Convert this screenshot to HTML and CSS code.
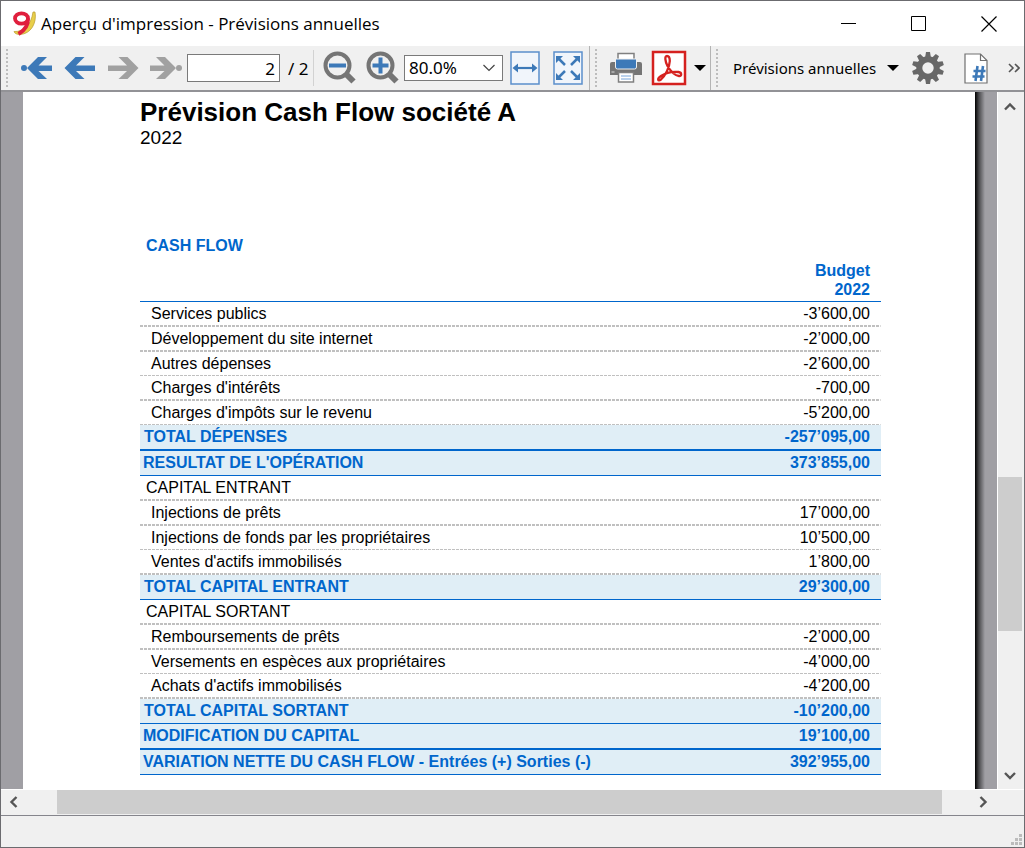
FILE: index.html
```
<!DOCTYPE html>
<html lang="fr">
<head>
<meta charset="utf-8">
<title>Aperçu d'impression - Prévisions annuelles</title>
<link rel="stylesheet" href="styles.css">
</head>
<body>
<div class="window">
  <header class="titlebar">
    <svg class="app-icon" width="26" height="26" viewBox="0 0 26 26" aria-hidden="true">
      <path d="M22 1h2c2 11-4 22-15 22.500-3 0-5.500-1-6-3C12 21 20 15 22 1z" fill="#e8cf4a" stroke="#b89a2c" stroke-width=".7"/>
      <ellipse cx="10.500" cy="7.500" rx="6.500" ry="5.200" fill="#fff" stroke="#e01f3d" stroke-width="3.800"/>
      <path d="M17 7.500c.2 6-3.500 12-9.500 15.500" fill="none" stroke="#e01f3d" stroke-width="3.800"/>
    </svg>
    <span class="window-title">Aperçu d'impression - Prévisions annuelles</span>
    <div class="caption-buttons">
      <button class="caption-button" type="button" aria-label="Réduire"><svg width="16" height="16"><path d="M0 7.500h15" stroke="#000"/></svg></button>
      <button class="caption-button" type="button" aria-label="Agrandir"><svg width="16" height="16"><path d="M.5.5h14v14h-14z" fill="none" stroke="#000"/></svg></button>
      <button class="caption-button" type="button" aria-label="Fermer"><svg width="16" height="16"><path d="M.5.5l15 15M15.500.5l-15 15" stroke="#000" stroke-width="1.200"/></svg></button>
    </div>
  </header>

  <div class="toolbars">
    <div class="toolbar first">
      <span class="grip"></span>
      <button class="tool nav" type="button" aria-label="Première page"><svg width="32" height="24" viewBox="0 0 32 24" fill="#3d79b8"><circle cx="3" cy="12" r="3"/><path d="M17 1h9l-8.500 8.500H31v5.500H17.500L26 23h-9L6 12z"/></svg></button>
      <button class="tool nav" type="button" aria-label="Page précédente"><svg width="32" height="24" viewBox="0 0 32 24" fill="#3d79b8"><path d="M11.500 1h9L12 9.500h19v5.500H12l8.500 8h-9L.5 12z"/></svg></button>
      <button class="tool nav" type="button" aria-label="Page suivante"><svg width="32" height="24" viewBox="0 0 32 24" fill="#a1a1a1"><path d="M20.500 1h-9L20 9.500H1v5.500h19l-8.500 8h9L31.500 12z"/></svg></button>
      <button class="tool nav" type="button" aria-label="Dernière page"><svg width="32" height="24" viewBox="0 0 32 24" fill="#a1a1a1"><circle cx="29" cy="12" r="3"/><path d="M15 1H6l8.500 8.500H0v5.500h14.500L6 23h9l11-11z"/></svg></button>
      <input class="page-input" type="text" value="2" aria-label="Page">
      <span class="page-total">/ 2</span>
      <span class="divider"></span>
      <button class="tool nav" type="button" aria-label="Zoom arrière"><svg width="34" height="34" viewBox="0 0 34 34"><circle cx="14.500" cy="14.500" r="12" fill="none" stroke="#757575" stroke-width="4"/><path d="M23 23l7.500 7.500" stroke="#757575" stroke-width="6"/><path d="M6 14.500h17" stroke="#3d79b8" stroke-width="4"/></svg></button>
      <button class="tool nav" type="button" aria-label="Zoom avant"><svg width="34" height="34" viewBox="0 0 34 34"><circle cx="14.500" cy="14.500" r="12" fill="none" stroke="#757575" stroke-width="4"/><path d="M23 23l7.500 7.500" stroke="#757575" stroke-width="6"/><path d="M6.500 14.500h16M14.500 6.500v16" stroke="#3d79b8" stroke-width="4"/></svg></button>
      <div class="zoom-box">
        <select class="zoom-select" aria-label="Zoom"><option>80.0%</option><option>100.0%</option></select>
        <svg class="zoom-arrow" width="12" height="8"><path d="M.5 1l5.500 5.500L11.500 1" fill="none" stroke="#444" stroke-width="1.200"/></svg>
      </div>
      <button class="tool nav" type="button" aria-label="Largeur de page"><svg width="30" height="34" viewBox="0 0 30 34"><path d="M1 1h28v32H1z" fill="#f1f5fb" stroke="#5b8fcb" stroke-width="1.500"/><path d="M7 17h16" stroke="#3d79b8" stroke-width="2.200"/><path d="M2.500 17L8 12.500v9zM27.500 17L22 12.500v9z" fill="#3d79b8"/></svg></button>
      <button class="tool nav" type="button" aria-label="Page entière"><svg width="30" height="34" viewBox="0 0 30 34"><path d="M1 1h28v32H1z" fill="#f1f5fb" stroke="#5b8fcb" stroke-width="1.500"/><path d="M5 7l7 7M25 7l-7 7M5 27l7-7M25 27l-7-7" stroke="#3d79b8" stroke-width="2.500"/><path d="M3 5h7l-7 7zM27 5h-7l7 7zM3 29h7l-7-7zM27 29h-7l7-7z" fill="#3d79b8"/></svg></button>
    </div>
    <div class="toolbar">
      <span class="grip"></span>
      <button class="tool nav" type="button" aria-label="Imprimer"><svg width="34" height="32" viewBox="0 0 34 32"><path d="M9 11V1.500h16V11" fill="#fff" stroke="#808080" stroke-width="1.500"/><path d="M1 12q0-2 2-2h28q2 0 2 2v11H1z" fill="#757575"/><path d="M6.500 7h21v8q0 2-2 2h-17q-2 0-2-2z" fill="#3d79b8" stroke="#f0f0f0"/><path d="M2.500 20h3" stroke="#ddd"/><path d="M9.500 20.500h15v9.500h-15z" fill="#fff" stroke="#808080" stroke-width="1.500"/><path d="M12 24h10M12 27h10" stroke="#76a5db"/></svg></button>
      <button class="tool nav" type="button" aria-label="Exporter en PDF"><svg width="36" height="36" viewBox="0 0 36 36" fill="none" stroke="#d5211f"><path d="M2 2h32v32H2z" fill="#fff" stroke-width="2.500"/><path d="M16 6c-2.500 0-2 5 .5 10 3 5 7 9.500 11.500 10 3 .3 3-3.500-.5-4-6-.7-13 1-17.500 4s-3 6 0 3.500c4-3.500 8.500-11.500 8.800-18.500 0-3-1-5-2.800-5z" stroke-width="2.300"/></svg></button>
      <button class="tool caret" type="button" aria-label="Options PDF"><svg width="12" height="6"><path d="M0 0h12L6 6z"/></svg></button>
    </div>
    <div class="toolbar last">
      <span class="grip"></span>
      <button class="tool report" type="button">Prévisions annuelles<svg width="12" height="6"><path d="M0 0h12L6 6z"/></svg></button>
      <button class="tool gear" type="button" aria-label="Paramètres"><svg width="32" height="32" viewBox="-16 -16 32 32"><circle r="8.700" fill="none" stroke="#686868" stroke-width="6"/><g fill="#686868"><path id="tooth" d="M-3-10l1-6h4l1 6z"/><use href="#tooth" transform="rotate(36)"/><use href="#tooth" transform="rotate(72)"/><use href="#tooth" transform="rotate(108)"/><use href="#tooth" transform="rotate(144)"/><use href="#tooth" transform="rotate(180)"/><use href="#tooth" transform="rotate(216)"/><use href="#tooth" transform="rotate(252)"/><use href="#tooth" transform="rotate(288)"/><use href="#tooth" transform="rotate(324)"/></g></svg></button>
      <button class="tool sheet" type="button" aria-label="Numéros de page"><svg width="24" height="31" viewBox="0 0 24 31"><path d="M1 1h15.500L23 7.500V30H1z" fill="#fff" stroke="#707070" stroke-width="1.200"/><path d="M16.500 1v6.500H23" fill="none" stroke="#707070" stroke-width="1.200"/><path d="M13.500 13l-2 15M19 13l-2 15M9.500 18h12M8.500 23.500h12" fill="none" stroke="#3d79b8" stroke-width="2.600"/></svg></button>
      <button class="tool more" type="button" aria-label="Plus d'outils"><svg width="12" height="10" fill="none" stroke="#555" stroke-width="1.600"><path d="M1 1l4 4-4 4M7 1l4 4-4 4"/></svg></button>
    </div>
  </div>

  <div class="workspace">
    <main class="viewport">
      <article class="sheet-page">
        <h1 class="doc-title">Prévision Cash Flow société A</h1>
        <p class="doc-year">2022</p>
        <table class="cash">
          <caption class="cash-caption">CASH FLOW</caption>
          <thead>
            <tr><th scope="col" aria-label="Description"></th><th scope="col" class="amount">Budget<br>2022</th></tr>
          </thead>
          <tbody>
            <tr class="item"><td>Services publics</td><td class="amount">-3’600,00</td></tr>
            <tr class="item"><td>Développement du site internet</td><td class="amount">-2’000,00</td></tr>
            <tr class="item thin"><td>Autres dépenses</td><td class="amount">-2’600,00</td></tr>
            <tr class="item"><td>Charges d'intérêts</td><td class="amount">-700,00</td></tr>
            <tr class="item thin"><td>Charges d'impôts sur le revenu</td><td class="amount">-5’200,00</td></tr>
            <tr class="total strong"><td>TOTAL DÉPENSES</td><td class="amount">-257’095,00</td></tr>
            <tr class="total result"><td>RESULTAT DE L'OPÉRATION</td><td class="amount">373’855,00</td></tr>
            <tr class="section"><td>CAPITAL ENTRANT</td><td></td></tr>
            <tr class="item"><td>Injections de prêts</td><td class="amount">17’000,00</td></tr>
            <tr class="item thin"><td>Injections de fonds par les propriétaires</td><td class="amount">10’500,00</td></tr>
            <tr class="item"><td>Ventes d'actifs immobilisés</td><td class="amount">1’800,00</td></tr>
            <tr class="total"><td>TOTAL CAPITAL ENTRANT</td><td class="amount">29’300,00</td></tr>
            <tr class="section"><td>CAPITAL SORTANT</td><td></td></tr>
            <tr class="item"><td>Remboursements de prêts</td><td class="amount">-2’000,00</td></tr>
            <tr class="item thin"><td>Versements en espèces aux propriétaires</td><td class="amount">-4’000,00</td></tr>
            <tr class="item"><td>Achats d'actifs immobilisés</td><td class="amount">-4’200,00</td></tr>
            <tr class="total"><td>TOTAL CAPITAL SORTANT</td><td class="amount">-10’200,00</td></tr>
            <tr class="total strong result"><td>MODIFICATION DU CAPITAL</td><td class="amount">19’100,00</td></tr>
            <tr class="total result"><td>VARIATION NETTE DU CASH FLOW - Entrées (+) Sorties (-)</td><td class="amount">392’955,00</td></tr>
          </tbody>
        </table>
      </article>
      <div class="page-shadow"></div>
    </main>
    <div class="vscroll" aria-hidden="true">
      <svg class="arrow" width="12" height="10"><path d="M1 7.500l5-5 5 5" /></svg>
      <div class="vtrack"><span class="vbefore"></span><span class="vthumb"></span><span class="vafter"></span></div>
      <svg class="arrow" width="12" height="10"><path d="M1 2l5 5 5-5"/></svg>
    </div>
  </div>
  <div class="hscroll" aria-hidden="true">
    <svg class="arrow" width="10" height="12"><path d="M7.500 1l-5 5 5 5"/></svg>
    <div class="htrack"><span class="hthumb"></span><span class="hafter"></span></div>
    <svg class="arrow" width="10" height="12"><path d="M2.500 1l5 5-5 5"/></svg>
  </div>
  <footer class="statusbar">
    <svg width="11" height="11" fill="#bcbcbc"><path d="M8 0h3v3H8zM8 4h3v3H8zM8 8h3v3H8zM4 4h3v3H4zM4 8h3v3H4zM0 8h3v3H0z"/></svg>
  </footer>
</div>
</body>
</html>
```
FILE: styles.css
```
* { box-sizing: border-box; }

body {
  margin: 0;
  font-family: "Liberation Sans", Arial, sans-serif;
  color: #000;
}

button {
  border: 0;
  padding: 0;
  background: none;
  color: inherit;
}

svg { display: block; flex: none; }

.window {
  display: flex;
  flex-direction: column;
  height: 100vh;
  border: 1px solid #6b6b6f;
  background: #f0f0f0;
}

/* Title bar */
.titlebar {
  display: flex;
  align-items: center;
  flex: none;
  height: 45px;
  padding-left: 10px;
  background: #fff;
}

.window-title {
  flex: 1;
  margin-left: 4px;
  font: 17px "Open Sans", "Noto Sans", sans-serif;
}

.caption-buttons { display: flex; }

.caption-button {
  display: grid;
  place-items: center;
  width: 70px;
  height: 42px;
}

/* Toolbars */
.toolbars {
  display: flex;
  flex: none;
  height: 46px;
  border-bottom: 2px solid #929296;
}

.toolbar {
  display: flex;
  align-items: center;
  flex: none;
  padding-left: 5px;
  border-right: 1px solid #b4b4b4;
  font: 17px "Noto Sans", sans-serif;
}

.toolbar.last { flex: 1; border-right: 0; }

.grip {
  width: 2px;
  height: 38px;
  margin-right: 7px;
  background: repeating-linear-gradient(#bdbdbd 0 2px, transparent 2px 4px);
}

.tool {
  display: flex;
  align-items: center;
  justify-content: center;
  height: 40px;
}

.nav { width: 43px; }

.page-input {
  width: 93px;
  height: 28px;
  padding: 0 4px;
  border: 1px solid #7a7a7a;
  background: #fff;
  font: inherit;
  text-align: right;
}

.page-total { width: 33px; padding-left: 8px; white-space: nowrap; }

.divider {
  width: 1px;
  height: 36px;
  margin-right: 4px;
  background: #d2d2d2;
}

.zoom-box {
  display: grid;
  align-items: center;
  width: 99px;
}

.zoom-select {
  grid-area: 1 / 1;
  width: 100%;
  height: 26px;
  padding: 0 4px;
  border: 1px solid #7a7a7a;
  border-radius: 0;
  background: #fff;
  color: #000;
  font: inherit;
  line-height: 24px;
  appearance: none;
}

.zoom-arrow {
  grid-area: 1 / 1;
  justify-self: end;
  margin-right: 8px;
  pointer-events: none;
}

.caret { width: 20px; }
.report { gap: 11px; margin-left: 8px; font: 15px "Noto Sans", sans-serif; }
.gear { width: 32px; margin-left: 13px; }
.sheet { width: 24px; margin-left: 20px; }
.more { width: 16px; margin: 0 2px 0 auto; }

/* Document area */
.workspace { display: flex; flex: 1; min-height: 0; }

.viewport {
  display: flex;
  flex: 1;
  padding-left: 22px;
  overflow: hidden;
  background: #a09fa4;
}

.sheet-page {
  flex: 1;
  padding: 5px 94px 0 117px;
  background: #fff;
}

.page-shadow {
  width: 22px;
  background: linear-gradient(to right, #000 0, #4c4c4f 4px, #a09fa4 10px);
}

.doc-title {
  margin: 0;
  font-size: 26px;
  line-height: 30px;
}

.doc-year {
  margin: 0 0 86px;
  font-size: 19px;
  line-height: 22px;
}

.cash {
  width: 100%;
  border-spacing: 0;
  font-size: 16px;
}

.cash-caption {
  padding-left: 6px;
  color: #0066cc;
  font-weight: bold;
  line-height: 22px;
  text-align: left;
}

.cash th {
  padding: 4px 0 2px;
  border-bottom: 1px solid #0066cc;
  color: #0066cc;
  line-height: 19px;
}

.cash td { padding: 1px 0 0; line-height: 22px; }
.cash .amount { padding-right: 11px; text-align: right; }
.cash .item td:first-child { padding-left: 11px; }
.cash .section td:first-child { padding-left: 6px; }
.cash .total td:first-child { padding-left: 4px; }
.cash .result td:first-child { padding-left: 3px; }

.item,
.section {
  height: 25px;
  background: repeating-linear-gradient(to right, #c0c0c0 0 3px, #fff 3px 4px) bottom / 100% 2px no-repeat;
}

.item td,
.section td { border-bottom: 2px solid transparent; }

.item.thin { height: 24px; background-size: 100% 1px; }
.item.thin td { border-bottom-width: 1px; }

.cash .total td {
  padding-bottom: 1px;
  border-bottom: 1px solid #0066cc;
  background: #e0eef6;
  color: #0066cc;
  font-weight: bold;
}

.cash .total.strong td { border-bottom-width: 2px; }

/* Scroll bars */
.arrow { fill: none; stroke: #555; stroke-width: 2.4; }

.vscroll {
  display: flex;
  flex-direction: column;
  align-items: center;
  width: 27px;
  padding: 10px 2px 8px 0;
  border-left: 1px solid #fff;
}

.vtrack {
  display: flex;
  flex: 1;
  flex-direction: column;
  align-self: stretch;
  padding: 6px 0;
}

.vbefore { flex: 359; }
.vthumb { flex: 154; background: #cdcdcd; }
.vafter { flex: 134; }

.hscroll {
  display: flex;
  align-items: center;
  flex: none;
  height: 27px;
  padding: 0 36px 1px 8px;
  border-top: 1px solid #fff;
  border-bottom: 1px solid #85858c;
}

.htrack { display: flex; flex: 1; height: 24px; padding: 0 0 0 38px; }
.hthumb { flex: 885; background: #cdcdcd; }
.hafter { flex: 36; }

.statusbar {
  display: flex;
  align-items: flex-end;
  justify-content: flex-end;
  flex: none;
  height: 31px;
  padding: 2px;
}
```
